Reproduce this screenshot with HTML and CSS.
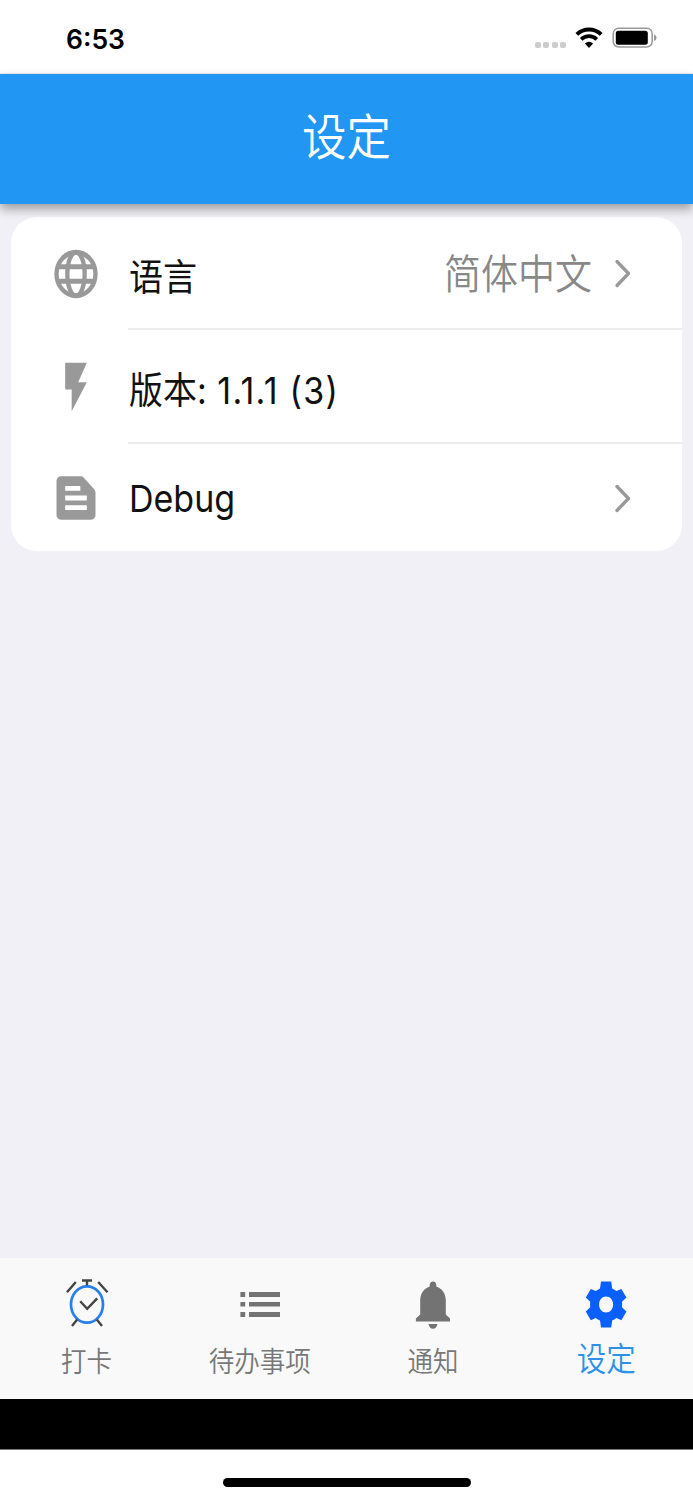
FILE: index.html
```html
<!DOCTYPE html>
<html lang="zh-CN">
<head>
  <meta charset="UTF-8">
  <meta name="viewport" content="width=device-width, initial-scale=1.0">
  <title>设定</title>
  <link rel="stylesheet" href="styles.css">
</head>
<body>
  <div class="status">
    <span class="time">6:53</span>
    <div class="dots"><i></i><i></i><i></i><i></i></div>
    <svg class="wifi" width="28" height="22" viewBox="0 0 28 22">
      <path d="M1.8 7.4C8.6 .8 19.400 .8 26.200 7.400" fill="none" stroke="#000" stroke-width="3.900"/>
      <path d="M6.200 12.400C10.600 8.100 17.400 8.100 21.800 12.400" fill="none" stroke="#000" stroke-width="3.700"/>
      <path d="M9.900 16.600Q14 13.100 18.100 16.600L14 20.900z"/>
    </svg>
    <svg class="battery" width="45" height="22" viewBox="0 0 45 22">
      <rect x="1.200" y="1.200" width="39" height="18.800" rx="5.500" fill="#fff" stroke="#999" stroke-width="1.500"/>
      <rect x="3.800" y="3.800" width="32" height="14" rx="2.500"/>
      <path d="M42 7.500q2.600 1 2.600 3.200t-2.600 3.200z" fill="#999"/>
    </svg>
  </div>

  <header class="header"><h1>设定</h1></header>

  <main class="content">
    <div class="card">
      <div class="row">
        <svg class="icon" viewBox="0 0 24 24" preserveAspectRatio="none"><g fill="none" stroke="#999" stroke-width="2"><circle cx="12" cy="12" r="9"/><ellipse cx="12" cy="12" rx="4" ry="9"/><path d="M3.700 9h16.600M3.700 15h16.600"/></g></svg>
        <div class="cell line"><span class="label first">语言</span><span class="value">简体中文</span>
          <svg class="arrow" width="18" height="30" viewBox="0 0 18 30"><path d="M3 3.500l11.500 12L3 27.500"/></svg></div>
      </div>
      <div class="row version">
        <svg class="icon" viewBox="0 0 24 24" preserveAspectRatio="none"><path d="M7 2v11h3v9l7-12h-4l4-8z"/></svg>
        <div class="cell line"><span class="label">版本: <span class="number">1.1.1 (3)</span></span></div>
      </div>
      <div class="row debug">
        <svg class="icon" viewBox="0 0 24 24" preserveAspectRatio="none"><path fill-rule="evenodd" d="M5 3h9.200c.5 0 1 .2 1.400.600l4.800 4.800c.4.400.6.900.6 1.400V19a2 2 0 0 1-2 2H5a2 2 0 0 1-2-2V5a2 2 0 0 1 2-2zM7 7v2h7V7zM7 11v2h10v-2zM7 15v2h10v-2z"/></svg>
        <div class="cell"><span class="label latin">Debug</span>
          <svg class="arrow" width="18" height="30" viewBox="0 0 18 30"><path d="M3 3.500l11.500 12L3 27.500"/></svg></div>
      </div>
    </div>
  </main>

  <nav class="tabs">
    <div class="tab">
      <svg width="44" height="50" viewBox="0 0 44 50" fill="none" stroke="#444" stroke-width="2.400"><ellipse cx="22" cy="26.500" rx="16" ry="18.200" stroke="#2680eb" stroke-width="2.700"/><path d="M17 2.500h10M22 2.500v5M10.800 4L2 14.300M33.200 4L42.500 14.300M12.200 41.500L7 48M31.800 41.500l5.200 6.500M15.200 23.300l7 7.500 10-10.500"/></svg>
      <span>打卡</span>
    </div>
    <div class="tab">
      <svg width="44" height="50" viewBox="0 0 44 50" fill="#737373"><path d="M2.400 14h4.800v5H2.400zM11 14h31v5H11zM2.400 24h4.800v4.600H2.400zM11 24h31v4.600H11zM2.400 34h4.800v5H2.400zM11 34h31v5H11z"/></svg>
      <span class="wide">待办事项</span>
    </div>
    <div class="tab">
      <svg width="44" height="50" viewBox="0 0 44 50" fill="#737373"><path d="M22 3.500c2 0 3.300 1.600 3.300 3.800v1.200C31.500 10.500 34.800 16 34.800 23v13.500l4.200 4v3H4.900v-3l4.300-4V23c0-7 3.300-12.500 9.500-14.500V7.300c0-2.200 1.300-3.800 3.300-3.800zM17.500 46h9c-.6 3-2.200 4.800-4.500 4.800S18 49 17.500 46z"/></svg>
      <span>通知</span>
    </div>
    <div class="tab active">
      <svg width="44" height="50" viewBox="0 0 44 50" fill="#0a60ff"><path fill-rule="evenodd" d="M17 3.500h10.200l1 7.100q2.300 1 4.200 2.500l5-2.100 5 8.600-4.400 4.200q.4 2.700 0 5.400l4.400 4.200-5 8.900-5-2.300q-2 1.600-4.200 2.600l-1 7H17l-1-7q-2.200-1-4.200-2.600l-5 2.300-5-8.900 4.400-4.200q-.4-2.700 0-5.400l-4.400-4.200 5-8.600 5 2.100q1.900-1.500 4.200-2.500zM22.100 18.500c-4 0-7 3.500-7 8s3 8 7 8 7-3.500 7-8-3-8-7-8z"/></svg>
      <span>设定</span>
    </div>
  </nav>
  <div class="black"></div>
  <footer class="home"><div class="indicator"></div></footer>
</body>
</html>
```
FILE: styles.css
```css
* { box-sizing: border-box; }
body { margin: 0; height: 1500px; display: flex; flex-direction: column; background: #fff; font-family: Inter, "Noto Sans CJK SC", sans-serif; overflow: hidden; }
.status { height: 74px; padding: 2px 36px 0 66px; display: flex; align-items: center; border-bottom: 1px solid #eee; }
.time { font-size: 26.5px; font-weight: 600; padding-top: 2px; }
.dots { display: flex; gap: 2.5px; margin: 14px 9px 0 auto; }
.dots i { width: 6px; height: 6px; border-radius: 2px; background: #ccc; }
.battery { margin-left: 9px; }
.header { height: 130px; background: #2196f3; color: #fff; text-align: center; box-shadow: 0 5px 10px rgba(0,0,0,.35); z-index: 1; }
h1 { margin: 28px 0 0; font-size: 44.5px; line-height: 64px; font-weight: 350; transform: scaleY(1.1); font-family: "Noto Sans CJK SC", sans-serif; }
.content { flex: 1; padding: 13px 11px; background: #f0f0f6; }
.card { height: 334px; background: #fff; border-radius: 26px; overflow: hidden; }
.row { height: 113px; padding-left: 39px; display: flex; align-items: center; }
.row.version { height: 114px; }
.row.debug { height: 107px; }
.icon { width: 52px; height: 58px; fill: #999; flex: none; }
.cell { flex: 1; height: 100%; margin-left: 26px; padding-right: 50px; display: flex; align-items: center; }
.line { border-bottom: 2px solid #ededed; }
.label { padding: 2px 0 0 1px; font-size: 34px; color: #111; transform: scaleY(1.1); white-space: nowrap; }
.label.first { padding-top: 4px; }
.number { margin-left: 1px; letter-spacing: 1.25px; }
.value { margin-left: auto; margin-right: 22px; padding-bottom: 2px; font-size: 37px; font-weight: 350; color: #888; transform: scaleY(1.1); }
.arrow { fill: none; stroke: #999; stroke-width: 3.3; stroke-linecap: round; stroke-linejoin: round; }
.latin + .arrow { margin-left: auto; }
.tabs { height: 141px; padding-top: 20px; background: #f9f9f9; display: flex; }
.tab { flex: 1; display: flex; flex-direction: column; align-items: center; color: #777; }
.tab svg { flex: none; overflow: visible; }
.tab span { margin-top: 13px; font: 350 25.5px/38px "Noto Sans CJK SC", sans-serif; transform: scaleY(1.1); }
.tab.active span { margin-top: 10px; font-size: 29.5px; color: #2d91e5; }
.black { height: 51px; background: #000; border-bottom: 1px solid #777; }
.home { height: 50px; padding-top: 28px; }
.indicator { width: 248px; height: 9px; margin: 0 auto; border-radius: 5px; background: #000; }
```
